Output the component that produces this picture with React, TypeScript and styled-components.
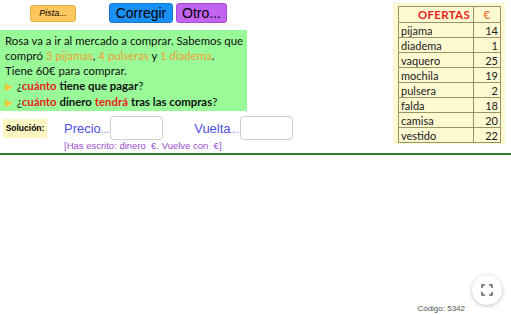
import React from "react";
import styled, { createGlobalStyle } from "styled-components";

const Global = createGlobalStyle`
  html, body { margin: 0; padding: 0; background: #fff; }
  body { font-family: "Liberation Sans", Arial, sans-serif; }
`;

const Page = styled.div`
  position: relative;
  width: 511px;
  height: 315px;
  overflow: hidden;
  display: flex;
  flex-direction: column;
`;

const Top = styled.div`
  display: grid;
  grid-template-columns: 393px 112px;
  height: 153px;
`;

const Left = styled.div`
  display: flex;
  flex-direction: column;
`;

const ButtonRow = styled.div`
  display: flex;
  align-items: flex-start;
  height: 30px;
  padding: 3px 0 0 30px;
  box-sizing: border-box;
`;

const Btn = styled.button<{ $bg: string; $border: string; $small?: boolean }>`
  box-sizing: border-box;
  background: ${(p) => p.$bg};
  border: 1px solid ${(p) => p.$border};
  border-radius: 3px;
  color: #000;
  padding: 0;
  font-family: "Liberation Sans", Arial, sans-serif;
  font-size: ${(p) => (p.$small ? "9px" : "14px")};
  font-style: ${(p) => (p.$small ? "italic" : "normal")};
  width: ${(p) => (p.$small ? "46px" : "auto")};
  height: ${(p) => (p.$small ? "17px" : "20px")};
  margin-top: ${(p) => (p.$small ? "2px" : "0")};
  margin-right: ${(p) => (p.$small ? "33px" : "3px")};
  line-height: 1;
`;

const WideBtn = styled(Btn)<{ $w: number }>`
  width: ${(p) => p.$w}px;
`;

const Story = styled.div`
  width: 247px;
  height: 81px;
  background: #98fb98;
  box-sizing: border-box;
  padding: 3px 0 0 5px;
  font-family: Lato, "DejaVu Sans", sans-serif;
  font-size: 11.4px;
  line-height: 15px;
  color: #111;
  white-space: nowrap;
`;

const Orange = styled.span`
  color: #f39c34;
`;

const Red = styled.span`
  color: #e8221b;
  font-weight: bold;
`;

const Bold = styled.span`
  font-weight: bold;
`;

const Marker = styled.span`
  color: #f5c53a;
  font-size: 10px;
  margin-right: 4px;
`;

const SolutionRow = styled.div`
  display: flex;
  align-items: center;
  margin-top: 5px;
  height: 24px;
  padding-left: 3px;
`;

const SolLabel = styled.div`
  width: 44px;
  height: 19px;
  background: #fdf6c3;
  font-family: "Liberation Sans", Arial, sans-serif;
  font-weight: bold;
  font-size: 8.5px;
  display: flex;
  align-items: center;
  justify-content: center;
  margin-right: 17px;
`;

const FieldLabel = styled.span<{ $gap: number }>`
  color: #4f4fe6;
  font-family: "Liberation Sans", Arial, sans-serif;
  font-size: 13px;
  margin-right: 1px;
  margin-left: ${(p) => p.$gap}px;
`;

const Dots = styled.span`
  font-size: 10px;
  color: #7070ee;
`;

const Input = styled.div`
  width: 53px;
  height: 24px;
  box-sizing: border-box;
  border: 1px solid #cfcfcf;
  border-radius: 4px;
  background: #fff;
`;

const Hint = styled.div`
  padding-left: 64px;
  font-family: "Liberation Sans", Arial, sans-serif;
  font-size: 9.5px;
  color: #9b4fd0;
  height: 12px;
  line-height: 11px;
`;

const Panel = styled.div`
  margin-top: 3px;
  height: 141px;
  background: #fef9d0;
  box-sizing: border-box;
  padding: 3px 0 0 5px;
`;

const Table = styled.table`
  border-collapse: collapse;
  width: 103px;
  font-family: Lato, "DejaVu Sans", sans-serif;
  font-size: 11px;
  color: #222;
`;

const Cell = styled.td<{ $num?: boolean }>`
  border: 1px solid #9a9366;
  height: 14px;
  padding: 0 2px;
  line-height: 13px;
  text-align: ${(p) => (p.$num ? "right" : "left")};
  width: ${(p) => (p.$num ? "22px" : "auto")};
`;

const HeadCell = styled.th<{ $euro?: boolean }>`
  border: 1px solid #9a9366;
  height: 15px;
  padding: 0 3px;
  line-height: 13px;
  font-weight: ${(p) => (p.$euro ? "normal" : "bold")};
  color: ${(p) => (p.$euro ? "#e8641b" : "#e8221b")};
  text-align: ${(p) => (p.$euro ? "center" : "right")};
  font-size: 11.5px;
  letter-spacing: 0.3px;
`;

const Divider = styled.div`
  height: 2px;
  background: #2e7d32;
`;

const Footer = styled.div`
  flex: 1;
  display: flex;
  justify-content: flex-end;
  align-items: flex-end;
  padding: 0 46px 2px 0;
`;

const Code = styled.span`
  font-family: "Liberation Sans", Arial, sans-serif;
  font-size: 8px;
  color: #555;
`;

const Fullscreen = styled.div`
  position: absolute;
  left: 472px;
  top: 275px;
  width: 30px;
  height: 30px;
  border-radius: 50%;
  background: #fff;
  box-shadow: 0 1px 4px rgba(0, 0, 0, 0.25);
  display: flex;
  align-items: center;
  justify-content: center;
`;

const rows: [string, number][] = [
  ["pijama", 14],
  ["diadema", 1],
  ["vaquero", 25],
  ["mochila", 19],
  ["pulsera", 2],
  ["falda", 18],
  ["camisa", 20],
  ["vestido", 22],
];

export default function App() {
  return (
    <Page>
      <Global />
      <Top>
        <Left>
          <ButtonRow>
            <Btn $bg="#fdc75f" $border="#e2ab3f" $small>
              Pista...
            </Btn>
            <WideBtn $bg="#1a8ff5" $border="#1278d0" $w={64}>
              Corregir
            </WideBtn>
            <WideBtn $bg="#c263f2" $border="#a54ad4" $w={51}>
              Otro...
            </WideBtn>
          </ButtonRow>
          <Story>
            Rosa va a ir al mercado a comprar. Sabemos que
            <br />
            compró <Orange>3 pijamas</Orange>, <Orange>4 pulseras</Orange> y{" "}
            <Orange>1 diadema</Orange>.
            <br />
            Tiene 60€ para comprar.
            <br />
            <Marker>▶</Marker>¿<Red>cuánto</Red> <Bold>tiene que pagar</Bold>?
            <br />
            <Marker>▶</Marker>¿<Red>cuánto</Red> <Bold>dinero</Bold>{" "}
            <Red>tendrá</Red> <Bold>tras las compras</Bold>?
          </Story>
          <SolutionRow>
            <SolLabel>Solución:</SolLabel>
            <FieldLabel $gap={0}>
              Precio<Dots>...</Dots>
            </FieldLabel>
            <Input />
            <FieldLabel $gap={31}>
              Vuelta<Dots>...</Dots>
            </FieldLabel>
            <Input />
          </SolutionRow>
          <Hint>[Has escrito: dinero &nbsp;€. Vuelve con &nbsp;€]</Hint>
        </Left>
        <Panel>
          <Table>
            <thead>
              <tr>
                <HeadCell>OFERTAS</HeadCell>
                <HeadCell $euro>€</HeadCell>
              </tr>
            </thead>
            <tbody>
              {rows.map(([name, price]) => (
                <tr key={name}>
                  <Cell>{name}</Cell>
                  <Cell $num>{price}</Cell>
                </tr>
              ))}
            </tbody>
          </Table>
        </Panel>
      </Top>
      <Divider />
      <Footer>
        <Code>Código: 5342</Code>
      </Footer>
      <Fullscreen>
        <svg width="12" height="12" viewBox="0 0 12 12" fill="none" stroke="#5f6f5a" strokeWidth="1.6">
          <path d="M1 4V1h3M8 1h3v3M11 8v3H8M4 11H1V8" />
        </svg>
      </Fullscreen>
    </Page>
  );
}
